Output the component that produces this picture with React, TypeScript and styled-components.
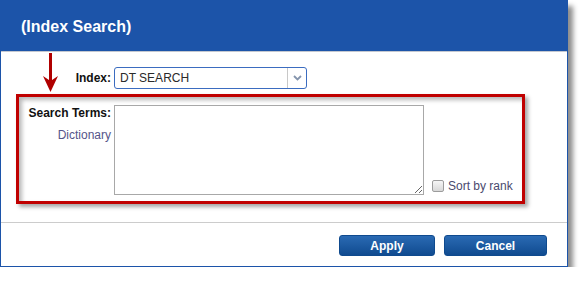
import React from "react";
import styled, { createGlobalStyle } from "styled-components";

const GlobalStyle = createGlobalStyle`
  html, body {
    margin: 0;
    padding: 0;
    background: #ffffff;
  }
  body {
    font-family: "Liberation Sans", Arial, sans-serif;
  }
`;

const App: React.FC = () => {
  return (
    <>
      <GlobalStyle />
      <Dialog>
        <Header>
          <Title>(Index Search)</Title>
        </Header>

        <Body>
          <Arrow width="16" height="40" viewBox="0 0 16 40">
            <rect x="6" y="0" width="3" height="30" fill="#b00000" />
            <polygon points="0,23 7.5,28 15,23 7.5,39" fill="#b00000" />
          </Arrow>

          <IndexRow>
            <FieldLabel>Index:</FieldLabel>
            <Select>
              <SelectText>DT SEARCH</SelectText>
              <SelectButton>
                <svg width="9" height="6" viewBox="0 0 9 6">
                  <path d="M1 1 L4.5 4.5 L8 1" fill="none" stroke="#8595ad" strokeWidth="1.8" />
                </svg>
              </SelectButton>
            </Select>
          </IndexRow>

          <Highlight>
            <LabelColumn>
              <FieldLabel>Search Terms:</FieldLabel>
              <SubLabel>Dictionary</SubLabel>
            </LabelColumn>
            <TermsInput />
            <CheckLabel>
              <CheckBox type="checkbox" />
              Sort by rank
            </CheckLabel>
          </Highlight>
        </Body>

        <Footer>
          <Button $width={96}>Apply</Button>
          <Button $width={103}>Cancel</Button>
        </Footer>
      </Dialog>
    </>
  );
};

export default App;

const Dialog = styled.div`
  box-sizing: border-box;
  width: 568px;
  border: 1px solid #1c54a9;
  background: #fff;
  box-shadow: 5px 6px 5px rgba(0, 0, 0, 0.45);
  display: flex;
  flex-direction: column;
`;

const Header = styled.div`
  height: 50px;
  display: flex;
  align-items: center;
  padding-left: 20px;
  background: #1c54a9;
  border-bottom: 1px solid #c4c8d0;
`;

const Title = styled.h1`
  margin: 0;
  color: #fff;
  font-size: 16px;
  font-weight: bold;
  margin-top: 1px;
`;

const Body = styled.div`
  position: relative;
  padding: 15px 0 18px 15px;
`;

// annotation arrow pointing at the highlighted box
const Arrow = styled.svg`
  position: absolute;
  left: 42px;
  top: 1px;
`;

const IndexRow = styled.div`
  display: flex;
  align-items: center;
  gap: 3px;
  padding-left: 3px;
  margin-bottom: 5px;
`;

const FieldLabel = styled.label`
  width: 92px;
  text-align: right;
  font-size: 12px;
  line-height: 14px;
  font-weight: bold;
  color: #111;
`;

const Select = styled.div`
  box-sizing: border-box;
  width: 193px;
  height: 22px;
  display: flex;
  border: 1px solid #3b6cc0;
  border-radius: 3px;
  background: #fff;
`;

const SelectText = styled.span`
  flex: 1;
  padding-left: 5px;
  font-size: 12px;
  line-height: 20px;
  color: #2a2a2a;
`;

const SelectButton = styled.span`
  width: 18px;
  display: flex;
  align-items: center;
  justify-content: center;
  border-left: 1px solid #c8c8c8;
`;

const Highlight = styled.div`
  box-sizing: border-box;
  width: 509px;
  height: 110px;
  display: flex;
  gap: 3px;
  padding: 8px 0 0 0;
  border: 3px solid #c00000;
  box-shadow: 3px 3px 4px rgba(0, 0, 0, 0.35), inset 3px 3px 4px rgba(0, 0, 0, 0.28);
`;

const LabelColumn = styled.div`
  display: flex;
  flex-direction: column;
  padding-top: 1px;
  gap: 8px;
`;

const SubLabel = styled.span`
  width: 92px;
  text-align: right;
  font-size: 12px;
  line-height: 14px;
  color: #55558a;
`;

const TermsInput = styled.textarea`
  box-sizing: border-box;
  width: 310px;
  height: 90px;
  margin: 0;
  border: 1px solid #a8a8a8;
  resize: both;
  font-family: "Liberation Sans", Arial, sans-serif;
  font-size: 12px;
  outline: none;
`;

const CheckLabel = styled.label`
  align-self: flex-start;
  display: flex;
  align-items: center;
  gap: 4px;
  margin-left: 5px;
  margin-top: 74px;
  font-size: 12px;
  line-height: 14px;
  color: #4a4a6e;
`;

const CheckBox = styled.input`
  appearance: none;
  box-sizing: border-box;
  width: 12px;
  height: 12px;
  margin: 0;
  border: 1px solid #9c9c9c;
  border-radius: 2px;
  background: linear-gradient(#f6f6f6, #d8d8d8);
`;

const Footer = styled.div`
  display: flex;
  justify-content: flex-end;
  gap: 9px;
  padding: 12px 20px 10px 0;
  border-top: 1px solid #cccccc;
`;

const Button = styled.button<{ $width: number }>`
  box-sizing: border-box;
  width: ${props => props.$width}px;
  height: 21px;
  padding: 0;
  border: 1px solid #0f4a8e;
  border-radius: 3px;
  background: linear-gradient(#2a6ab3, #104b90);
  color: #fff;
  font-family: "Liberation Sans", Arial, sans-serif;
  font-size: 12px;
  font-weight: bold;
  cursor: pointer;
`;
